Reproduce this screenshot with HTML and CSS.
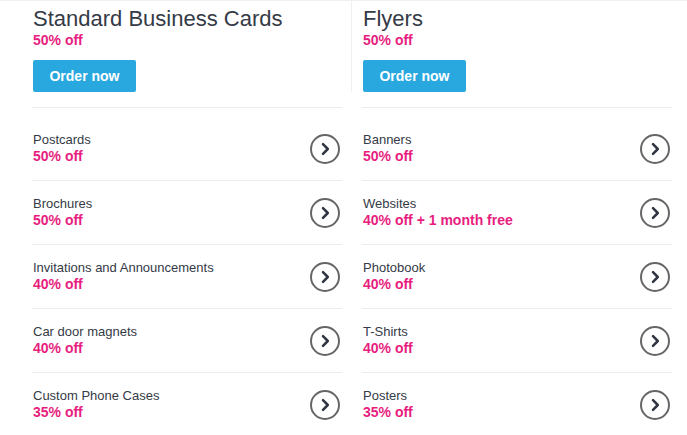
FILE: index.html
```html
<!DOCTYPE html>
<html lang="en">
<head>
<meta charset="utf-8">
<title>Deals</title>
<link rel="stylesheet" href="styles.css">
</head>
<body>
<div class="page">
  <div class="col col-left">
    <div class="feature">
      <h2 class="feature-title">Standard Business Cards</h2>
      <div class="off">50% off</div>
      <a class="btn" href="#">Order now</a>
    </div>
    <ul class="list">
      <li class="row"><div class="info"><div class="name">Postcards</div><div class="off">50% off</div></div><svg class="go" viewBox="0 0 30 30" width="30" height="30"><circle cx="15" cy="15" r="14" /><path d="M13 10.2 L17.8 15 L13 19.8" /></svg></li>
      <li class="row"><div class="info"><div class="name">Brochures</div><div class="off">50% off</div></div><svg class="go" viewBox="0 0 30 30" width="30" height="30"><circle cx="15" cy="15" r="14" /><path d="M13 10.2 L17.8 15 L13 19.8" /></svg></li>
      <li class="row"><div class="info"><div class="name">Invitations and Announcements</div><div class="off">40% off</div></div><svg class="go" viewBox="0 0 30 30" width="30" height="30"><circle cx="15" cy="15" r="14" /><path d="M13 10.2 L17.8 15 L13 19.8" /></svg></li>
      <li class="row"><div class="info"><div class="name">Car door magnets</div><div class="off">40% off</div></div><svg class="go" viewBox="0 0 30 30" width="30" height="30"><circle cx="15" cy="15" r="14" /><path d="M13 10.2 L17.8 15 L13 19.8" /></svg></li>
      <li class="row"><div class="info"><div class="name">Custom Phone Cases</div><div class="off">35% off</div></div><svg class="go" viewBox="0 0 30 30" width="30" height="30"><circle cx="15" cy="15" r="14" /><path d="M13 10.2 L17.8 15 L13 19.8" /></svg></li>
    </ul>
  </div>
  <div class="col col-right">
    <div class="feature">
      <h2 class="feature-title">Flyers</h2>
      <div class="off">50% off</div>
      <a class="btn" href="#">Order now</a>
    </div>
    <ul class="list">
      <li class="row"><div class="info"><div class="name">Banners</div><div class="off">50% off</div></div><svg class="go" viewBox="0 0 30 30" width="30" height="30"><circle cx="15" cy="15" r="14" /><path d="M13 10.2 L17.8 15 L13 19.8" /></svg></li>
      <li class="row"><div class="info"><div class="name">Websites</div><div class="off">40% off + 1 month free</div></div><svg class="go" viewBox="0 0 30 30" width="30" height="30"><circle cx="15" cy="15" r="14" /><path d="M13 10.2 L17.8 15 L13 19.8" /></svg></li>
      <li class="row"><div class="info"><div class="name">Photobook</div><div class="off">40% off</div></div><svg class="go" viewBox="0 0 30 30" width="30" height="30"><circle cx="15" cy="15" r="14" /><path d="M13 10.2 L17.8 15 L13 19.8" /></svg></li>
      <li class="row"><div class="info"><div class="name">T-Shirts</div><div class="off">40% off</div></div><svg class="go" viewBox="0 0 30 30" width="30" height="30"><circle cx="15" cy="15" r="14" /><path d="M13 10.2 L17.8 15 L13 19.8" /></svg></li>
      <li class="row"><div class="info"><div class="name">Posters</div><div class="off">35% off</div></div><svg class="go" viewBox="0 0 30 30" width="30" height="30"><circle cx="15" cy="15" r="14" /><path d="M13 10.2 L17.8 15 L13 19.8" /></svg></li>
    </ul>
  </div>
</div>
</body>
</html>
```
FILE: styles.css
```css
html, body {
  margin: 0;
  padding: 0;
  background: #fff;
}
body {
  font-family: "Liberation Sans", Arial, sans-serif;
  color: #343a46;
  overflow: hidden;
}
.page {
  display: grid;
  grid-template-columns: 319px 320px;
  padding-left: 33px;
  border-top: 1px solid #f0f0f0;
  height: 434px;
}
.col-right {
  padding-left: 11px;
}
.feature {
  padding-top: 5px;
  height: 86px;
  display: flex;
  flex-direction: column;
  align-items: flex-start;
}
.col-left .feature {
  border-right: 1px solid #f0f0f0;
}
.feature-title {
  margin: 0;
  font-size: 22px;
  line-height: 26px;
  font-weight: normal;
  color: #343a46;
}
.off {
  font-size: 14px;
  line-height: 17px;
  font-weight: bold;
  color: #e71d80;
}
.btn {
  display: block;
  margin-top: 11px;
  width: 103px;
  text-align: center;
  background: #29a8e0;
  color: #fff;
  font-size: 14px;
  font-weight: bold;
  line-height: 32px;
  border-radius: 2px;
  text-decoration: none;
}
.list {
  list-style: none;
  margin: 15px 0 0 -1px;
  padding: 9px 0 0;
  width: 310px;
  border-top: 1px solid #ececec;
}
.row {
  display: flex;
  align-items: center;
  justify-content: space-between;
  height: 63px;
  padding-left: 1px;
  padding-right: 2px;
}
.row + .row {
  border-top: 1px solid #ececec;
}
.name {
  font-size: 13px;
  line-height: 16px;
  color: #343a46;
}
.go {
  display: block;
  flex: none;
}
.go circle {
  fill: none;
  stroke: #666;
  stroke-width: 2;
}
.go path {
  fill: none;
  stroke: #2f3540;
  stroke-width: 2.5;
  stroke-linecap: round;
  stroke-linejoin: round;
}
```
